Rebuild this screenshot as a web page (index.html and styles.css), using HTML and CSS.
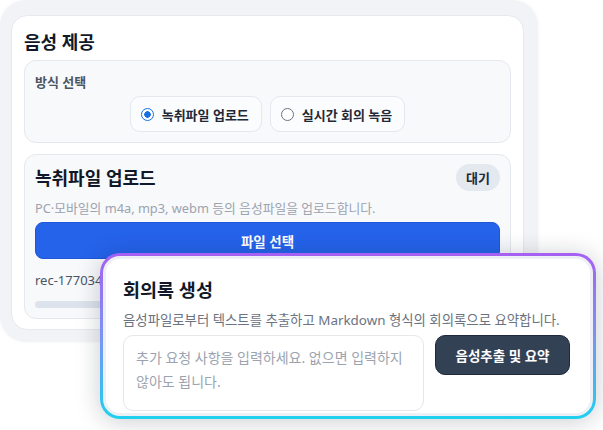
FILE: index.html
```html
<!DOCTYPE html>
<html lang="ko">
<head>
    <meta charset="UTF-8">
    <meta name="viewport" content="width=device-width, initial-scale=1.0">
    <title>음성 제공</title>
    <link rel="stylesheet" href="styles.css">
</head>
<body>
    <div class="stage">
        <div class="frame">
            <div class="panel">
                <h2 class="panel-title">음성 제공</h2>

                <!-- 방식 선택 -->
                <div class="section">
                    <div class="section-label">방식 선택</div>
                    <div class="options">
                        <label class="option">
                            <span class="radio checked"></span>
                            <span>녹취파일 업로드</span>
                        </label>
                        <label class="option">
                            <span class="radio"></span>
                            <span>실시간 회의 녹음</span>
                        </label>
                    </div>
                </div>

                <!-- 녹취파일 업로드 -->
                <div class="section upload">
                    <div class="upload-head">
                        <h3 class="upload-title">녹취파일 업로드</h3>
                        <span class="badge">대기</span>
                    </div>
                    <p class="upload-desc">PC·모바일의 m4a, mp3, webm 등의 음성파일을 업로드합니다.</p>
                    <button class="btn-primary" type="button">파일 선택</button>
                    <div class="file-name">rec-177034</div>
                    <div class="progress"><div class="progress-fill"></div></div>
                </div>
            </div>
        </div>

        <!-- 회의록 생성 -->
        <div class="summary">
            <div class="summary-body">
                <h2 class="summary-title">회의록 생성</h2>
                <p class="summary-desc">음성파일로부터 텍스트를 추출하고 Markdown 형식의 회의록으로 요약합니다.</p>
                <div class="summary-row">
                    <textarea class="request" placeholder="추가 요청 사항을 입력하세요. 없으면 입력하지 않아도 됩니다."></textarea>
                    <button class="btn-dark" type="button">음성추출 및 요약</button>
                </div>
            </div>
        </div>
    </div>
</body>
</html>
```

FILE: styles.css
```css
body {
    font-family: "Noto Sans", "Noto Sans CJK KR", sans-serif;
    margin: 0;
    padding: 0;
    background-color: #ffffff;
    color: #111827;
    overflow: hidden;
}
.stage {
    position: relative;
    width: 603px;
    height: 430px;
}
.frame {
    width: 538px;
    box-sizing: border-box;
    padding: 15px 14px 12px 11px;
    background-color: #f2f3f6;
    border-radius: 26px;
    box-shadow: 0 0 4px rgba(15, 23, 42, 0.04);
}
.panel {
    background-color: #ffffff;
    border: 1px solid #e6e9ef;
    border-radius: 16px;
    padding: 14px 12px 10px 12px;
}
.panel-title {
    margin: 0 0 6px 0;
    font-size: 18px;
    line-height: 24px;
    font-weight: 700;
    color: #111827;
}
.section {
    background-color: #f8f9fb;
    border: 1px solid #e5e8ee;
    border-radius: 12px;
    padding: 12px 10px 10px 10px;
}
.section-label {
    font-size: 13px;
    line-height: 18px;
    font-weight: 700;
    color: #4b5563;
}
.options {
    display: flex;
    justify-content: center;
    gap: 8px;
    margin-top: 5px;
}
.option {
    display: flex;
    align-items: center;
    gap: 8px;
    height: 36px;
    box-sizing: border-box;
    padding: 0 12px 0 10px;
    background-color: #fbfcfd;
    border: 1px solid #e3e7ee;
    border-radius: 10px;
    font-size: 13px;
    font-weight: 700;
    color: #1f2937;
}
.radio {
    width: 13px;
    height: 13px;
    box-sizing: border-box;
    border: 1.5px solid #6b7280;
    border-radius: 50%;
    background-color: #ffffff;
}
.radio.checked {
    border-color: #1a6fe0;
    background: radial-gradient(circle, #1a6fe0 0 3px, #ffffff 3.5px);
}
.section.upload {
    margin-top: 11px;
    padding: 9px 10px 10px 10px;
}
.upload-head {
    display: flex;
    justify-content: space-between;
    align-items: center;
}
.upload-title {
    margin: 0;
    font-size: 18px;
    line-height: 24px;
    font-weight: 700;
    color: #111827;
}
.badge {
    display: inline-flex;
    align-items: center;
    justify-content: center;
    width: 44px;
    height: 27px;
    border-radius: 14px;
    background-color: #e4e8ef;
    font-size: 13px;
    font-weight: 700;
    color: #1f2937;
}
.upload-desc {
    margin: 8px 0 0 0;
    font-size: 12.8px;
    line-height: 18px;
    color: #9ca3af;
    white-space: nowrap;
}
.btn-primary {
    display: block;
    width: 100%;
    height: 37px;
    margin-top: 5px;
    font-family: inherit;
    font-size: 13.5px;
    font-weight: 700;
    color: #ffffff;
    background-color: #2563eb;
    border: 1px solid #1f57d8;
    border-radius: 8px;
    cursor: pointer;
}
.file-name {
    margin-top: 11px;
    font-size: 13px;
    line-height: 20px;
    color: #4b5563;
}
.progress {
    margin-top: 11px;
    height: 7px;
    border-radius: 4px;
    background-color: #dde3ec;
}
.progress-fill {
    width: 0;
    height: 100%;
}
.summary {
    position: absolute;
    left: 100px;
    top: 253px;
    width: 496px;
    height: 166px;
    box-sizing: border-box;
    padding: 3px;
    border-radius: 20px;
    background: linear-gradient(180deg, #a660f2 0%, #7b93f4 50%, #1fd0ee 100%);
    box-shadow: 0 2px 24px rgba(15, 23, 42, 0.22);
}
.summary-body {
    height: 100%;
    box-sizing: border-box;
    background-color: #ffffff;
    border: 3px solid #edf0f4;
    border-radius: 17px;
    padding: 19px 20px 0 17px;
}
.summary-title {
    margin: 0;
    font-size: 18.5px;
    line-height: 24px;
    font-weight: 700;
    color: #111827;
}
.summary-desc {
    margin: 9px 0 0 0;
    font-size: 13.4px;
    line-height: 18px;
    color: #6b7280;
    white-space: nowrap;
}
.summary-row {
    display: flex;
    align-items: flex-start;
    gap: 11px;
    margin-top: 6px;
}
.request {
    width: 301px;
    height: 76px;
    box-sizing: border-box;
    padding: 10px 12px;
    border: 1px solid #e5e7eb;
    border-radius: 10px;
    font-family: inherit;
    font-size: 14px;
    line-height: 24px;
    color: #111827;
    resize: none;
    word-break: keep-all;
    overflow: hidden;
}
.request::placeholder {
    color: #9ca3af;
}
.btn-dark {
    width: 135px;
    height: 40px;
    font-family: inherit;
    font-size: 13.5px;
    font-weight: 700;
    color: #ffffff;
    background-color: #334155;
    border: 1px solid #1e293b;
    border-radius: 10px;
    cursor: pointer;
}
```
